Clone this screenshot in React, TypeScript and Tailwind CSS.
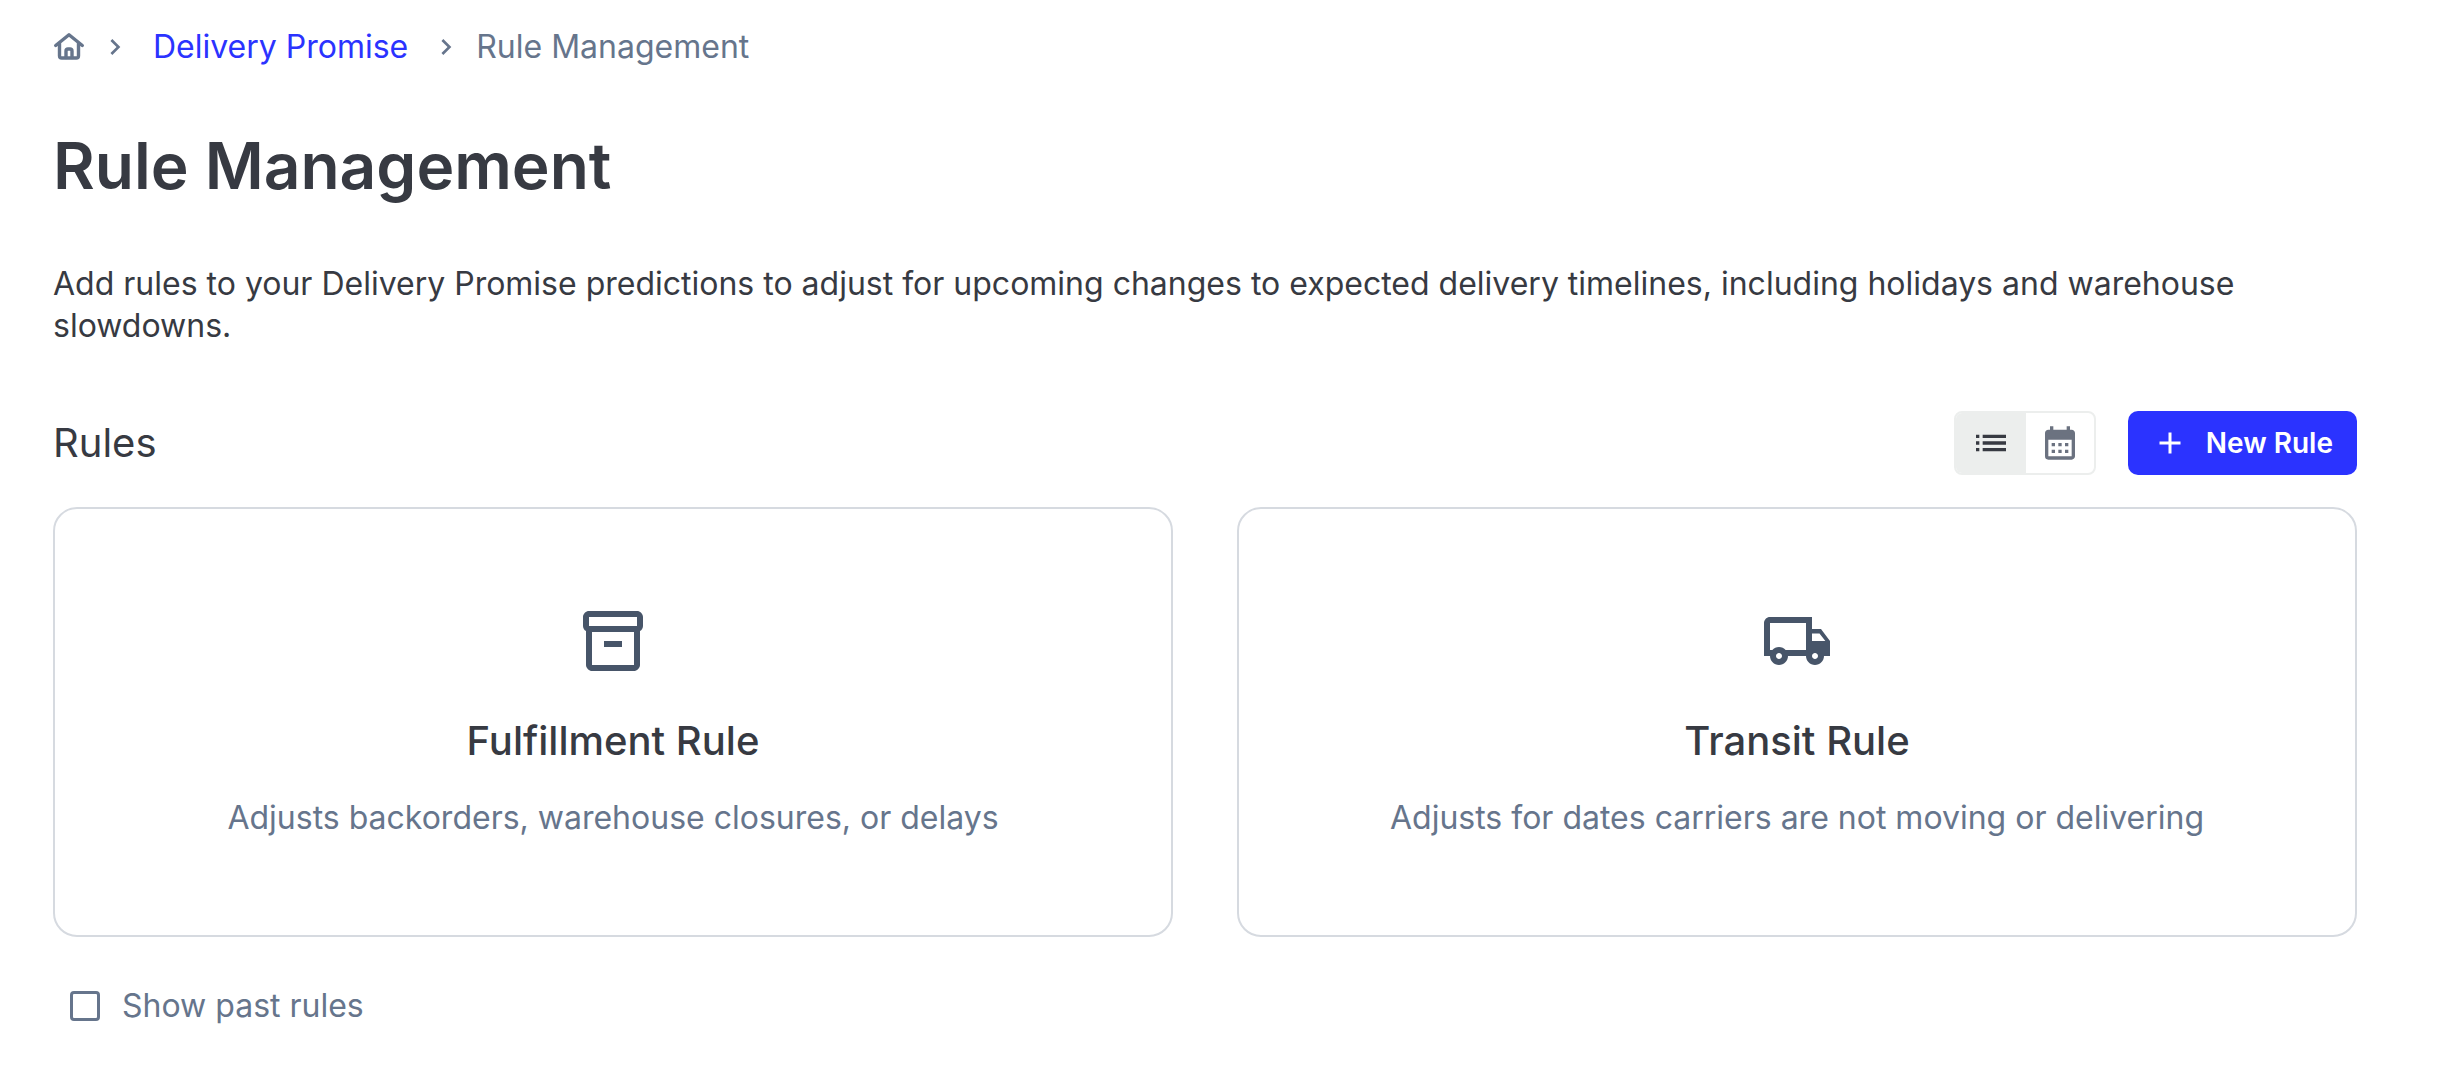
import { useState } from 'react';
import type { IconType } from 'react-icons';
import {
  MdAdd,
  MdCalendarMonth,
  MdChevronRight,
  MdList,
  MdOutlineInventory2,
  MdOutlineLocalShipping,
} from 'react-icons/md';

type View = 'list' | 'calendar';

interface RuleCard {
  title: string;
  description: string;
  icon: IconType;
}

const ruleCards: RuleCard[] = [
  {
    title: 'Fulfillment Rule',
    description: 'Adjusts backorders, warehouse closures, or delays',
    icon: MdOutlineInventory2,
  },
  {
    title: 'Transit Rule',
    description: 'Adjusts for dates carriers are not moving or delivering',
    icon: MdOutlineLocalShipping,
  },
];

const HomeIcon = () => (
  <svg
    viewBox="0 0 32 32"
    className="size-8"
    fill="none"
    stroke="currentColor"
    strokeWidth="3.4"
    strokeLinecap="round"
    strokeLinejoin="round"
    aria-hidden="true"
  >
    <path d="M2.700 14.500 16 3.700l13.300 10.800" />
    <path d="M6.500 12.500v12.300q0 2.200 2.200 2.200h14.600q2.200 0 2.200-2.200V12.500" />
    <path d="M13 26.500v-6.500q0-2 2-2h2q2 0 2 2v6.500" />
  </svg>
);

const App = () => {
  const [view, setView] = useState<View>('list');
  const [showPast, setShowPast] = useState(false);

  return (
    <main className="bg-white pt-[26px] pr-[97px] pb-12 pl-[53px] font-['Inter',sans-serif] text-[32px] leading-[42px] text-[#373a42]">
      <nav aria-label="Breadcrumb">
        <ol className="flex items-center text-[#66758c]">
          <li className="flex items-center">
            <a href="#home" aria-label="Home">
              <HomeIcon />
            </a>
            <MdChevronRight className="mx-[14px] size-8" aria-hidden="true" />
          </li>
          <li className="flex items-center pl-2">
            <a href="#delivery-promise" className="text-[#2b33ff]">
              Delivery Promise
            </a>
            <MdChevronRight className="mr-[14px] ml-[22px] size-8" aria-hidden="true" />
          </li>
          <li aria-current="page">Rule Management</li>
        </ol>
      </nav>

      <h1 className="mt-14 text-[64px] leading-[84px] font-semibold">Rule Management</h1>

      <p className="mt-[55px]">
        Add rules to your Delivery Promise predictions to adjust for upcoming changes to expected
        delivery timelines, including holidays and warehouse slowdowns.
      </p>

      <div className="mt-16 flex items-center justify-between">
        <h2 className="text-[40px] leading-[52px]">Rules</h2>
        <div className="flex items-center gap-8">
          <div className="flex h-16 overflow-hidden rounded-lg border-2 border-[#eceeed]">
            <button
              type="button"
              aria-label="List view"
              aria-pressed={view === 'list'}
              onClick={() => setView('list')}
              className={`flex w-[70px] items-center justify-center ${view === 'list' ? 'bg-[#eceeed] text-[#373a42]' : 'text-[#6b7280]'}`}
            >
              <MdList className="size-10" />
            </button>
            <button
              type="button"
              aria-label="Calendar view"
              aria-pressed={view === 'calendar'}
              onClick={() => setView('calendar')}
              className={`flex w-[68px] items-center justify-center ${view === 'calendar' ? 'bg-[#eceeed] text-[#373a42]' : 'text-[#6b7280]'}`}
            >
              <MdCalendarMonth className="size-10" />
            </button>
          </div>
          <button
            type="button"
            className="flex h-16 items-center gap-[18px] rounded-[10px] bg-[#2b33ff] px-6 text-[28px] font-semibold text-white"
          >
            <MdAdd className="size-9" />
            New Rule
          </button>
        </div>
      </div>

      <div className="mt-8 grid grid-cols-2 gap-16">
        {ruleCards.map(({ title, description, icon: Icon }) => (
          <button
            key={title}
            type="button"
            className="flex flex-col items-center rounded-3xl border-2 border-[#d6dae0] px-8 py-24"
          >
            <Icon className="size-[72px] text-[#475569]" />
            <span className="mt-[38px] text-[40px] leading-[52px] font-medium">{title}</span>
            <span className="mt-[30px] text-[#66758c]">{description}</span>
          </button>
        ))}
      </div>

      <label className="mt-12 ml-[17px] inline-flex items-center gap-[22px] text-[#66758c]">
        <input
          type="checkbox"
          checked={showPast}
          onChange={(e) => setShowPast(e.target.checked)}
          className="size-[30px] appearance-none rounded-[4px] border-3 border-[#66758c] checked:bg-[#66758c]"
        />
        Show past rules
      </label>
    </main>
  );
};

export default App;
